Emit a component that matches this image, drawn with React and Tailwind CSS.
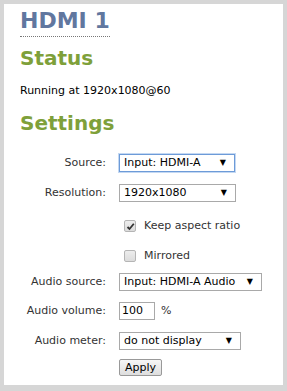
import React from "react";

const font = { fontFamily: '"DejaVu Sans", Verdana, sans-serif' };

function Row({ label, children, className = "" }) {
  return (
    <div className={`flex items-center ${className}`}>
      <label className="w-[86px] shrink-0 whitespace-nowrap text-right text-[11px] text-[#333]">{label}</label>
      <div className="ml-[13px] flex items-center">{children}</div>
    </div>
  );
}

function Select({ value, width, focused }) {
  return (
    <div
      className={`flex h-[18px] items-center justify-between border bg-white pl-[4px] pr-[8px] text-[11px] text-black ${
        focused ? "border-[#6d9bd8] shadow-[0_0_0_1px_#c4d8f2]" : "border-[#a9a9a9]"
      } ${width}`}
    >
      <span>{value}</span>
      <span className="text-[8px]">▼</span>
    </div>
  );
}

function Check({ checked, label }) {
  return (
    <div className="flex h-[12px] items-center gap-[8px] pl-[5px]">
      <div className="flex h-[12px] w-[12px] items-center justify-center rounded-[2px] border border-[#b5b5b5] bg-gradient-to-b from-[#ededed] to-[#dcdcdc]">
        {checked && (
          <svg width="9" height="9" viewBox="0 0 9 9">
            <path d="M1.5 5 L3.5 7 L7.8 1.8" stroke="#333" strokeWidth="1.8" fill="none" />
          </svg>
        )}
      </div>
      <span className="text-[11px] text-[#333]">{label}</span>
    </div>
  );
}

export default function App() {
  return (
    <div className="h-[391px] w-[287px] border-[4px] border-b-[6px] border-[#d6d6d6] bg-white" style={font}>
      <div className="px-[16px] pt-[3px]">
        <h1 className="inline-block border-b border-dotted border-[#777] pb-[1px] text-[22px] font-bold leading-[28px] text-[#61779f]">
          HDMI 1
        </h1>
        <h2 className="mt-[8px] text-[20px] font-bold leading-[26px] text-[#7ea03a]">Status</h2>
        <p className="mt-[13px] text-[11px] leading-[14px] text-black">Running at 1920x1080@60</p>
        <h2 className="mt-[12px] text-[20px] font-bold leading-[26px] text-[#7ea03a]">Settings</h2>

        <div className="mt-[18px] flex flex-col">
          <Row label="Source:">
            <Select value="Input: HDMI-A" width="w-[116px]" focused />
          </Row>
          <Row label="Resolution:" className="mt-[12px]">
            <Select value="1920x1080" width="w-[117px]" />
          </Row>
          <Row label="" className="mt-[18px]">
            <Check checked label="Keep aspect ratio" />
          </Row>
          <Row label="" className="mt-[18px]">
            <Check label="Mirrored" />
          </Row>
          <Row label="Audio source:" className="mt-[11px]">
            <Select value="Input: HDMI-A Audio" width="w-[143px]" />
          </Row>
          <Row label="Audio volume:" className="mt-[11px]">
            <div className="flex h-[18px] w-[36px] items-center border border-[#a9a9a9] pl-[2px] text-[11px] text-black">
              100
            </div>
            <span className="ml-[6px] text-[11px] text-[#333]">%</span>
          </Row>
          <Row label="Audio meter:" className="mt-[12px]">
            <Select value="do not display" width="w-[122px]" />
          </Row>
          <Row label="" className="mt-[9px]">
            <button className="h-[17px] w-[43px] rounded-[2px] border border-[#999] bg-gradient-to-b from-[#f6f6f6] to-[#dedede] text-[11px] leading-none text-black">
              Apply
            </button>
          </Row>
        </div>
      </div>
    </div>
  );
}
